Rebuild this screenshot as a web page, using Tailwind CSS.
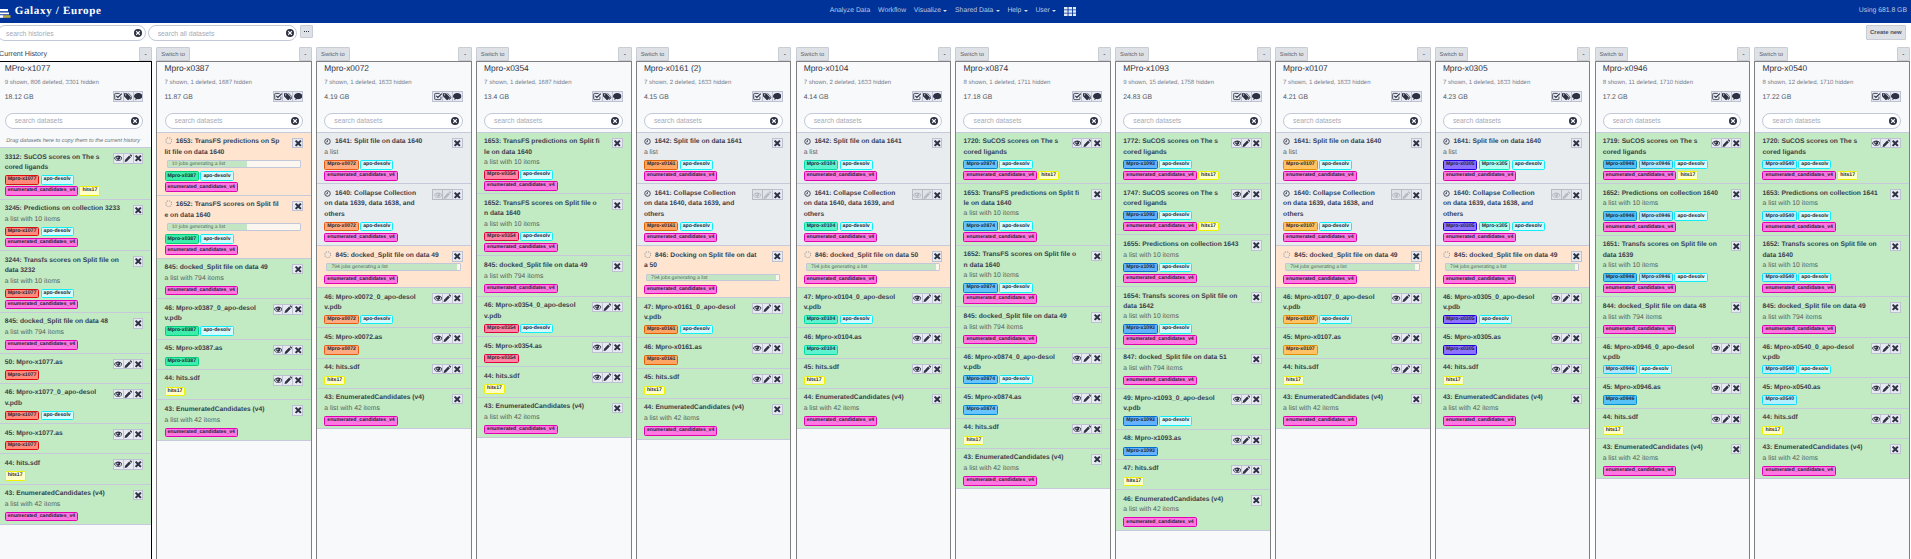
<!DOCTYPE html>
<html lang="en">
<head>
<meta charset="utf-8">
<title>Galaxy / Europe</title>
<script src="https://cdn.jsdelivr.net/npm/@tailwindcss/browser@4"></script>
</head>
<body class="bg-white overflow-hidden font-['Liberation_Sans',Arial,sans-serif] [text-rendering:geometricPrecision]">
<svg class="hidden" aria-hidden="true">
  <symbol id="i-eye" viewBox="0 0 24 24"><path fill-rule="evenodd" fill="currentColor" d="M12 4.500C7 4.500 2.700 7.600 0 12c2.700 4.400 7 7.500 12 7.500s9.300-3.100 12-7.500c-2.700-4.400-7-7.500-12-7.500zM12 17.700A8.300 8.300 0 0 1 2.800 12 8.600 8.600 0 0 1 7.500 7.800 5.500 5.500 0 1 0 16.500 7.800 8.600 8.600 0 0 1 21.200 12 8.300 8.300 0 0 1 12 17.700z"/><circle cx="10.500" cy="10" r="2" fill="#fff" opacity=".7"/></symbol>
  <symbol id="i-pen" viewBox="0 0 24 24"><path fill="currentColor" d="M1.500 22.500l1.500-6.500L14.500 4.500l5 5L8 21zM16 3l1.500-1.500a1.700 1.700 0 0 1 2.400 0l2.600 2.600a1.700 1.700 0 0 1 0 2.400L21 8z"/></symbol>
  <symbol id="i-x" viewBox="0 0 24 24"><path fill="currentColor" d="M6.500 2.500L12 8l5.500-5.500 4 4L16 12l5.500 5.500-4 4L12 16l-5.500 5.500-4-4L8 12 2.500 6.500z"/></symbol>
  <symbol id="i-check" viewBox="0 0 24 24"><path fill="none" stroke="currentColor" stroke-width="2.400" d="M19.500 13v6.500a2 2 0 0 1-2 2H4a2 2 0 0 1-2-2V6a2 2 0 0 1 2-2h12"/><path fill="none" stroke="currentColor" stroke-width="3.400" d="M6.500 11l4.500 4.500L22 4.500"/></symbol>
  <symbol id="i-tags" viewBox="0 0 24 24"><path fill="currentColor" fill-rule="evenodd" d="M0 3.500h8.500L19 14a1.500 1.500 0 0 1 0 2l-6.500 6.500a1.500 1.500 0 0 1-2 0L0 12zM4.500 6a2 2 0 1 0 0 4 2 2 0 0 0 0-4z"/><path fill="currentColor" d="M11 3.500h2.500L24 14a1.500 1.500 0 0 1 0 2l-6.500 6.500-1.800-1.800 5.300-5.300a1.800 1.800 0 0 0 0-2.400z"/></symbol>
  <symbol id="i-comment" viewBox="0 0 24 24"><path fill="currentColor" d="M12 3c6.600 0 12 3.900 12 8.700s-5.400 8.700-12 8.700c-1 0-2-.1-3-.3C7.500 21.300 5 22.300 2.500 22.500c1.300-1.300 2.300-3 2.500-4.500C2 16.500 0 14.300 0 11.700 0 6.900 5.400 3 12 3z"/></symbol>
  <symbol id="i-clear" viewBox="0 0 24 24"><circle cx="12" cy="12" r="12" fill="currentColor"/><path fill="#fff" d="M8 5.500l4 4 4-4L18.500 8l-4 4 4 4-2.500 2.500-4-4-4 4L5.500 16l4-4-4-4z"/></symbol>
  <symbol id="i-spin" viewBox="0 0 24 24"><circle cx="12" cy="12" r="9.500" fill="none" stroke="currentColor" stroke-width="3.400" stroke-dasharray="4.400 3"/></symbol>
  <symbol id="i-clock" viewBox="0 0 24 24"><circle cx="12" cy="12" r="9.500" fill="none" stroke="currentColor" stroke-width="3"/><path fill="none" stroke="currentColor" stroke-width="2.600" d="M12 6.500V13H7"/></symbol>
</svg>

<div class="h-screen flex flex-col">
  <header class="h-[23px] shrink-0 bg-[#003399] flex items-center text-[6.83px] text-[#bcc8e2]">
    <div class="w-[829.7px] shrink-0 flex items-center h-full">
      <svg class="w-[12px] h-[16px] shrink-0" viewBox="0 0 12 16"><rect x="0" y="5" width="8" height="2.200" fill="#fff"/><rect x="0" y="8.500" width="9" height="1.800" fill="#fff"/><rect x="0" y="11.200" width="3" height="2.600" fill="#fff"/><rect x="3" y="11.200" width="7.500" height="2.600" fill="#b8a83a"/></svg>
      <span class="ml-[2.7px] font-['Liberation_Serif',serif] font-bold text-[11.05px] tracking-[0.65px] text-white whitespace-nowrap">Galaxy / Europe</span>
    </div>
    <nav class="flex items-center gap-[7.8px] whitespace-nowrap">
      <span>Analyze Data</span>
      <span>Workflow</span>
      <span class="flex items-center">Visualize<i class="ml-[2.2px] w-0 h-0 border-x-[2px] border-t-[2px] border-x-transparent border-t-[#d5dcee]"></i></span>
      <span class="flex items-center">Shared Data<i class="ml-[2.2px] w-0 h-0 border-x-[2px] border-t-[2px] border-x-transparent border-t-[#d5dcee]"></i></span>
      <span class="flex items-center">Help<i class="ml-[2.2px] w-0 h-0 border-x-[2px] border-t-[2px] border-x-transparent border-t-[#d5dcee]"></i></span>
      <span class="flex items-center">User<i class="ml-[2.2px] w-0 h-0 border-x-[2px] border-t-[2px] border-x-transparent border-t-[#d5dcee]"></i></span>
      <svg class="w-[12.6px] h-[9px] text-[#e4e9f5]" viewBox="0 0 12.600 9" fill="currentColor"><rect width="3.600" height="2.500"/><rect x="4.500" width="3.600" height="2.500"/><rect x="9" width="3.600" height="2.500"/><rect y="3.250" width="3.600" height="2.500"/><rect x="4.500" y="3.250" width="3.600" height="2.500"/><rect x="9" y="3.250" width="3.600" height="2.500"/><rect y="6.500" width="3.600" height="2.500"/><rect x="4.500" y="6.500" width="3.600" height="2.500"/><rect x="9" y="6.500" width="3.600" height="2.500"/></svg>
    </nav>
    <span class="ml-auto mr-[4px] whitespace-nowrap">Using 681.8 GB</span>
  </header>

  <div class="h-[24px] shrink-0 flex items-start">
    <div class="relative ml-[-3px] w-[148.7px] mt-[2.3px] leading-none">
      <input class="block w-full h-[15.7px] rounded-full border border-[#c3c8d8] bg-white pl-[8px] text-[6.8px] placeholder:text-[#a6aab6] outline-none" placeholder="search histories">
      <svg class="absolute right-[4px] top-[4px] w-[8px] h-[8px] text-[#2c3143]"><use href="#i-clear"></use></svg>
    </div>
    <div class="relative ml-[2.6px] w-[149px] mt-[2.3px] leading-none">
      <input class="block w-full h-[15.7px] rounded-full border border-[#c3c8d8] bg-white pl-[8.4px] text-[6.8px] placeholder:text-[#a6aab6] outline-none" placeholder="search all datasets">
      <svg class="absolute right-[3.6px] top-[4px] w-[8px] h-[8px] text-[#2c3143]"><use href="#i-clear"></use></svg>
    </div>
    <button class="ml-[3px] mt-[2px] w-[12.4px] h-[13.3px] bg-[#dee2e6] border border-[#c8ccd4] rounded-[1px] flex items-center justify-center gap-[0.6px]">
      <i class="w-[1px] h-[1px] bg-[#2c3143]"></i><i class="w-[1px] h-[1px] bg-[#2c3143]"></i><i class="w-[1px] h-[1px] bg-[#2c3143]"></i>
    </button>
    <button class="ml-auto mr-[5.3px] mt-[2px] w-[39.7px] h-[14.7px] bg-[#dee2e6] border border-[#c8ccd4] rounded-[1px] text-[5.93px] font-semibold text-[#4a5060] whitespace-nowrap">Create new</button>
  </div>

  <main id="board" class="flex flex-1 min-h-0 ml-[-3.4px]"></main>
</div>

<script>
const TAG = {
  a:'border-[#12eef8] bg-[#d4fbff]',
  e:'border-[#e000b0] bg-[#ff78e2]',
  h:'border-[#eef000] bg-[#ffffca]',
  x1077:'border-[#de0c0c] bg-[#ff8a7c]',
  x0387:'border-[#00cc80] bg-[#3ceeaa]',
  x0072:'border-[#e85a10] bg-[#ffaa80]',
  x0354:'border-[#e00040] bg-[#ff86a4]',
  x0161:'border-[#e06000] bg-[#ffa564]',
  x0104:'border-[#00d8a8] bg-[#5ff2cf]',
  x0874:'border-[#0088d8] bg-[#66c4ff]',
  x1093:'border-[#0070d0] bg-[#62b2ff]',
  x0107:'border-[#e09000] bg-[#ffc264]',
  x0305:'border-[#2000e0] bg-[#8c72ff]',
  x305:'border-[#00e8c0] bg-[#aefff0]',
  x0946:'border-[#0090d0] bg-[#56c2f8]',
  x0946b:'border-[#10c8f0] bg-[#b2e8ff]',
  x0540:'border-[#10d8ff] bg-[#b4f0ff]'
};
const NAME = {a:'apo-desolv',e:'enumerated_candidates_v4',h:'hits17',x1077:'Mpro-x1077',x0387:'Mpro-x0387',x0072:'Mpro-x0072',x0354:'Mpro-x0354',x0161:'Mpro-x0161',x0104:'Mpro-x0104',x0874:'Mpro-x0874',x1093:'Mpro-x1093',x0107:'Mpro-x0107',x0305:'Mpro-x0305',x305:'Mpro-x305',x0946:'Mpro-x0946',x0946b:'Mpro-x0946',x0540:'Mpro-x0540'};

const ic = (id, cls) => `<svg class="${cls}"><use href="#i-${id}"></use></svg>`;
const tag = k => `<span class="inline-flex items-center h-[9.4px] px-[2px] mr-[1.3px] mt-[1.6px] border border-solid rounded-[1.5px] text-[5.15px] font-bold leading-none text-[#1c1f33] whitespace-nowrap ${TAG[k]}">${NAME[k]}</span>`;
const BTN_NORMAL = 'bg-[#e8eaf1] border-[#bdc1d2] text-[#2c3143]';
const BTN_FADED = 'bg-[#dfe2e6] border-[#b8bbc3] text-[#b5b9c1]';
const ICON_SIZE = 'w-[8.5px] h-[8.5px]';
const BTN_BOX = 'w-[10.9px] h-[10.7px] flex items-center justify-center border border-solid -ml-px first:ml-0';
const btn = (id, faded) => `<span class="${BTN_BOX} ${faded ? BTN_FADED : BTN_NORMAL}">${ic(id, ICON_SIZE)}</span>`;
const actions = m => {
  if (m === 'full') return btn('eye')+btn('pen')+btn('x');
  if (m === 'faded') return btn('eye',1)+btn('pen',1)+btn('x');
  return btn('x');
};
const BG = {ok:'bg-[#c2eac3]', run:'bg-[#ffe5cf]', q:'bg-[#e9ecef]'};
const SPIN = 'w-[7.5px] h-[7.5px] mr-[3.7px] inline-block align-[-1.5px] text-[#a4a8ae]';
const CLOCK = 'w-[7px] h-[7px] mr-[3.7px] inline-block align-[-1.5px] text-[#333a4a]';
const W60 = 'w-[60%]';
const W97 = 'w-[97.5%]';

function item(it){
  const [state, title, sub, tags, act, prog] = it;
  const icon = state==='run' ? ic('spin',SPIN) : state==='q' ? ic('clock',CLOCK) : '';
  const bar = prog ? `<div class="relative mx-[2.2px] mt-[2px] mb-[2px] h-[7.7px] border border-[#c3c8d8] rounded-[1px] bg-[#fbf6f0] overflow-hidden"><div class="absolute inset-y-0 left-0 bg-[#c2e6c3] ${prog[1]===60?W60:W97}"></div><div class="relative pl-[4px] text-[5.07px] leading-[6px] text-[#56685f] whitespace-nowrap">${prog[0]}</div></div>` : '';
  return `<section class="${BG[state]} border-b border-[#c5c9da] pt-[4.6px] pb-[2.9px] pl-[7.1px] pr-[7.8px]">
    <div class="flex justify-between">
      <div class="min-w-0 whitespace-nowrap text-[6.7px] leading-[10.4px] font-bold text-[#39404f]">${icon}${title.split('|').join('<br>')}</div>
      <div class="flex shrink-0 h-[10.4px] mt-[0.4px]">${actions(act)}</div>
    </div>
    ${sub?`<div class="text-[6.8px] leading-[10.4px] text-[#55625f] whitespace-nowrap">${sub}</div>`:''}
    ${bar}
    <div class="flex flex-wrap">${tags.map(tag).join('')}</div>
  </section>`;
}
const L10='a list with 10 items', L794='a list with 794 items', L42='a list with 42 items';
const P10=['10 jobs generating a list',60], P794=['794 jobs generating a list',97];

const base = (M, apo, as, enumNo, hitsNo, asNo, pdbNo) => [
  ['ok',`${pdbNo}: ${apo}_0_apo-desol|v.pdb`,'',[M,'a'],'full'],
  ['ok',`${asNo}: ${as}.as`,'',[M],'full'],
  ['ok',`${hitsNo}: hits.sdf`,'',['h'],'full'],
  ['ok',`${enumNo}: EnumeratedCandidates (v4)`,L42,['e'],'x']
];
const COLS = [
 {n:'MPro-x1077',s:'9 shown, 806 deleted, 3301 hidden',g:'18.12 GB',cur:1,items:[
  ['ok','3312: SuCOS scores on The s|cored ligands','',['x1077','a','e','h'],'full'],
  ['ok','3245: Predictions on collection 3233',L10,['x1077','a','e'],'x'],
  ['ok','3244: Transfs scores on Split file on|data 3232',L10,['x1077','a','e'],'x'],
  ['ok','845: docked_Split file on data 48',L794,['e'],'x'],
  ['ok','50: Mpro-x1077.as','',['x1077'],'full'],
  ['ok','46: Mpro-x1077_0_apo-desol|v.pdb','',['x1077','a'],'full'],
  ['ok','45: Mpro-x1077.as','',['x1077'],'full'],
  ['ok','44: hits.sdf','',['h'],'full'],
  ['ok','43: EnumeratedCandidates (v4)',L42,['e'],'x']]},
 {n:'Mpro-x0387',s:'7 shown, 1 deleted, 1687 hidden',g:'11.87 GB',items:[
  ['run','1653: TransFS predictions on Sp|lit file on data 1640','',['x0387','a','e'],'x',P10],
  ['run','1652: TransFS scores on Split fil|e on data 1640','',['x0387','a','e'],'x',P10],
  ['ok','845: docked_Split file on data 49',L794,['e'],'x'],
  ...base('x0387','Mpro-x0387','Mpro-x0387',43,44,45,46)]},
 {n:'Mpro-x0072',s:'7 shown, 1 deleted, 1633 hidden',g:'4.19 GB',items:[
  ['q','1641: Split file on data 1640','a list',['x0072','a','e'],'x'],
  ['q','1640: Collapse Collection|on data 1639, data 1638, and|others','',['x0072','a','e'],'faded'],
  ['run','845: docked_Split file on data 49','',['e'],'x',P794],
  ...base('x0072','Mpro-x0072','Mpro-x0072',43,44,45,46)]},
 {n:'Mpro-x0354',s:'7 shown, 1 deleted, 1687 hidden',g:'13.4 GB',items:[
  ['ok','1653: TransFS predictions on Split fi|le on data 1640',L10,['x0354','a','e'],'x'],
  ['ok','1652: TransFS scores on Split file o|n data 1640',L10,['x0354','a','e'],'x'],
  ['ok','845: docked_Split file on data 49',L794,['e'],'x'],
  ...base('x0354','Mpro-x0354','Mpro-x0354',43,44,45,46)]},
 {n:'Mpro-x0161 (2)',s:'7 shown, 2 deleted, 1633 hidden',g:'4.15 GB',items:[
  ['q','1642: Split file on data 1641','a list',['x0161','a','e'],'x'],
  ['q','1641: Collapse Collection|on data 1640, data 1639, and|others','',['x0161','a','e'],'faded'],
  ['run','846: Docking on Split file on dat|a 50','',['e'],'x',P794],
  ...base('x0161','Mpro-x0161','Mpro-x0161',44,45,46,47)]},
 {n:'Mpro-x0104',s:'7 shown, 2 deleted, 1633 hidden',g:'4.14 GB',items:[
  ['q','1642: Split file on data 1641','a list',['x0104','a','e'],'x'],
  ['q','1641: Collapse Collection|on data 1640, data 1639, and|others','',['x0104','a','e'],'faded'],
  ['run','846: docked_Split file on data 50','',['e'],'x',P794],
  ...base('x0104','Mpro-x0104','Mpro-x0104',44,45,46,47)]},
 {n:'Mpro-x0874',s:'8 shown, 1 deleted, 1711 hidden',g:'17.18 GB',items:[
  ['ok','1720: SuCOS scores on The s|cored ligands','',['x0874','a','e','h'],'full'],
  ['ok','1653: TransFS predictions on Split fi|le on data 1640',L10,['x0874','a','e'],'x'],
  ['ok','1652: TransFS scores on Split file o|n data 1640',L10,['x0874','a','e'],'x'],
  ['ok','845: docked_Split file on data 49',L794,['e'],'x'],
  ...base('x0874','Mpro-x0874','Mpro-x0874',43,44,45,46)]},
 {n:'MPro-x1093',s:'9 shown, 15 deleted, 1758 hidden',g:'24.83 GB',items:[
  ['ok','1772: SuCOS scores on The s|cored ligands','',['x1093','a','e','h'],'full'],
  ['ok','1747: SuCOS scores on The s|cored ligands','',['x1093','a','e','h'],'full'],
  ['ok','1655: Predictions on collection 1643',L10,['x1093','a','e'],'x'],
  ['ok','1654: Transfs scores on Split file on|data 1642',L10,['x1093','a','e'],'x'],
  ['ok','847: docked_Split file on data 51',L794,['e'],'x'],
  ...base('x1093','Mpro-x1093','Mpro-x1093',46,47,48,49)]},
 {n:'Mpro-x0107',s:'7 shown, 1 deleted, 1633 hidden',g:'4.21 GB',items:[
  ['q','1641: Split file on data 1640','a list',['x0107','a','e'],'x'],
  ['q','1640: Collapse Collection|on data 1639, data 1638, and|others','',['x0107','a','e'],'faded'],
  ['run','845: docked_Split file on data 49','',['e'],'x',P794],
  ...base('x0107','Mpro-x0107','Mpro-x0107',43,44,45,46)]},
 {n:'Mpro-x0305',s:'7 shown, 1 deleted, 1633 hidden',g:'4.23 GB',items:[
  ['q','1641: Split file on data 1640','a list',['x0305','x305','a','e'],'x'],
  ['q','1640: Collapse Collection|on data 1639, data 1638, and|others','',['x0305','x305','a','e'],'faded'],
  ['run','845: docked_Split file on data 49','',['e'],'x',P794],
  ...base('x0305','Mpro-x0305','Mpro-x0305',43,44,45,46)]},
 {n:'Mpro-x0946',s:'8 shown, 11 deleted, 1710 hidden',g:'17.2 GB',items:[
  ['ok','1719: SuCOS scores on The s|cored ligands','',['x0946','x0946b','a','e','h'],'full'],
  ['ok','1652: Predictions on collection 1640',L10,['x0946','x0946b','a','e'],'x'],
  ['ok','1651: Transfs scores on Split file on|data 1639',L10,['x0946','x0946b','a','e'],'x'],
  ['ok','844: docked_Split file on data 48',L794,['e'],'x'],
  ['ok','46: Mpro-x0946_0_apo-desol|v.pdb','',['x0946b','a'],'full'],
  ['ok','45: Mpro-x0946.as','',['x0946'],'full'],
  ['ok','44: hits.sdf','',['h'],'full'],
  ['ok','43: EnumeratedCandidates (v4)',L42,['e'],'x']]},
 {n:'Mpro-x0540',s:'8 shown, 12 deleted, 1710 hidden',g:'17.22 GB',items:[
  ['ok','1720: SuCOS scores on The s|cored ligands','',['x0540','a','e','h'],'full'],
  ['ok','1653: Predictions on collection 1641',L10,['x0540','a','e'],'x'],
  ['ok','1652: Transfs scores on Split file on|data 1640',L10,['x0540','a','e'],'x'],
  ['ok','845: docked_Split file on data 49',L794,['e'],'x'],
  ...base('x0540','Mpro-x0540','Mpro-x0540',43,44,45,46)]}
];

const BORDER_CUR = 'border-[#000]';
const BORDER_OTHER = 'border-[#808080]';
document.getElementById('board').innerHTML = COLS.map(c => {
  const top = c.cur
    ? `<span class="pl-[2.4px] text-[7.15px] leading-[14.3px] text-[#3a4050] whitespace-nowrap">Current History</span>`
    : `<button class="w-[33.4px] h-[14.3px] bg-[#dee2e6] border border-[#c8ccd4] rounded-t-[1px] text-[5.85px] text-[#5c6270] whitespace-nowrap">Switch to</button>`;
  const drag = c.cur ? `<div class="pl-[1.6px] pt-[7px] h-[18.5px] text-[5.6px] leading-[10px] italic text-[#6c757d] whitespace-nowrap">Drag datasets here to copy them to the current history</div>` : '<div class="h-[3px]"></div>';
  return `<div class="w-[159.8px] shrink-0 pr-[4.2px] flex flex-col">
    <div class="flex justify-between items-start h-[14.3px]">${top}<button class="w-[13.4px] h-[14.3px] bg-[#dee2e6] border border-[#c8ccd4] rounded-t-[1px] text-[6.5px] text-[#2c3143]">-</button></div>
    <div class="flex-1 border-x-[1.5px] border-t-[1.3px] border-solid ${c.cur ? BORDER_CUR : BORDER_OTHER} bg-[#f8f9fa]">
      <div class="pl-[7.1px] pr-[7.8px]">
        <h3 class="h-[13px] text-[8.4px] leading-[13px] text-[#2c3143] whitespace-nowrap">${c.n}</h3>
        <div class="mt-[1.5px] h-[12px] text-[6.05px] leading-[12px] text-[#7a7f8f] whitespace-nowrap">${c.s}</div>
        <div class="mt-[2.3px] flex justify-between items-start h-[10.7px]">
          <span class="mt-[1.7px] text-[6.8px] leading-[10px] text-[#4f5666] whitespace-nowrap">${c.g}</span>
          <div class="flex">${btn('check')}${btn('tags')}${btn('comment')}</div>
        </div>
        <div class="relative mt-[11px] leading-none">
          <input class="block w-full h-[16px] rounded-full border border-[#c3c8d8] bg-white pl-[9px] text-[6.8px] placeholder:text-[#a6aab6] outline-none" placeholder="search datasets">
          <svg class="absolute right-[4.3px] top-[4px] w-[8px] h-[8px] text-[#2c3143]"><use href="#i-clear"></use></svg>
        </div>
        ${drag}
      </div>
      <div class="border-t border-[#c5c9da]">${c.items.map(item).join('')}</div>
    </div>
  </div>`;
}).join('');
</script>
</body>
</html>
